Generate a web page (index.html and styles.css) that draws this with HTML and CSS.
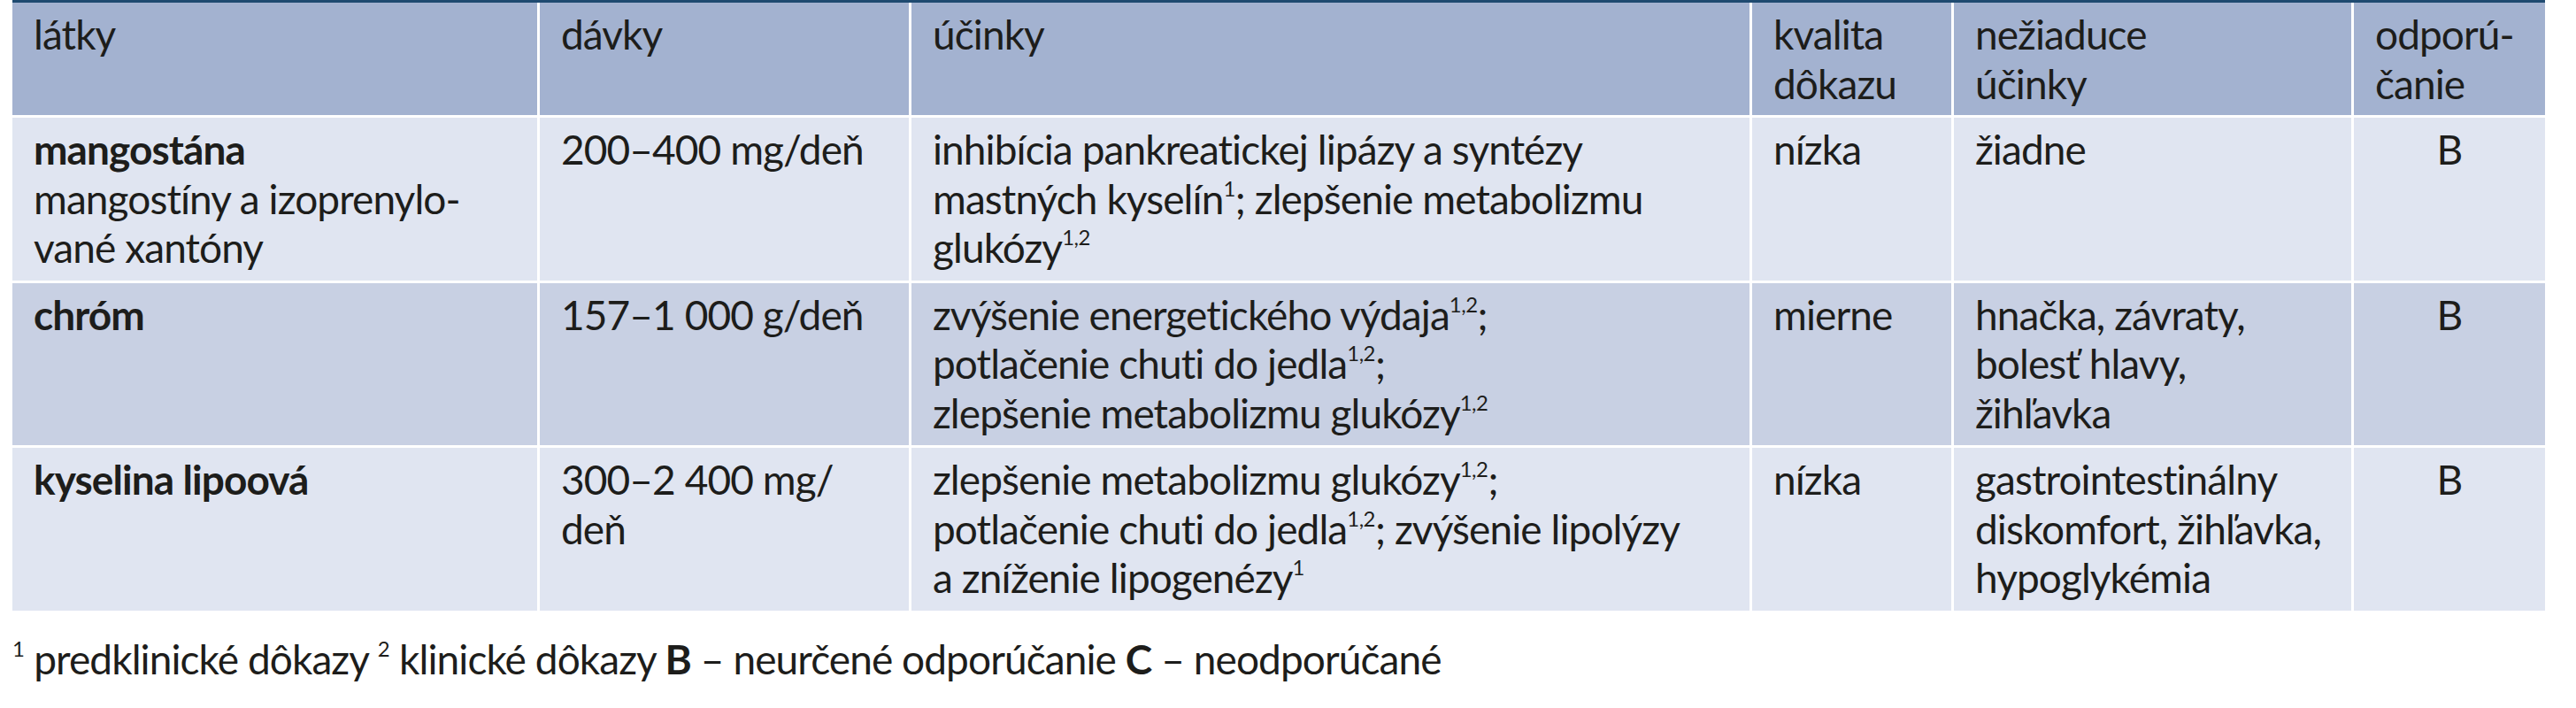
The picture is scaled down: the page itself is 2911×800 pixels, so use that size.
FILE: index.html
```html
<!DOCTYPE html>
<html lang="sk">
<head>
<meta charset="utf-8">
<title>Látky – prehľad</title>
<link rel="stylesheet" href="styles.css">
</head>
<body>
<main class="page">
  <table class="data">
    <colgroup>
      <col class="c1"><col class="c2"><col class="c3"><col class="c4"><col class="c5"><col class="c6">
    </colgroup>
    <thead>
      <tr>
        <th>látky</th>
        <th>dávky</th>
        <th>účinky</th>
        <th>kvalita<br>dôkazu</th>
        <th>nežiaduce<br>účinky</th>
        <th>odporú-<br>čanie</th>
      </tr>
    </thead>
    <tbody>
      <tr class="light">
        <td><span class="name">mangostána</span><br>mangostíny a izoprenylo-<br>vané xantóny</td>
        <td>200–400 mg/deň</td>
        <td>inhibícia pankreatickej lipázy a syntézy<br>mastných kyselín<sup>1</sup>; zlepšenie metabolizmu<br>glukózy<sup>1,2</sup></td>
        <td>nízka</td>
        <td>žiadne</td>
        <td class="center">B</td>
      </tr>
      <tr class="mid">
        <td><span class="name">chróm</span></td>
        <td>157–1&nbsp;000 g/deň</td>
        <td>zvýšenie energetického výdaja<sup>1,2</sup>;<br>potlačenie chuti do jedla<sup>1,2</sup>;<br>zlepšenie metabolizmu glukózy<sup>1,2</sup></td>
        <td>mierne</td>
        <td>hnačka, závraty,<br>bolesť hlavy,<br>žihľavka</td>
        <td class="center">B</td>
      </tr>
      <tr class="light last">
        <td><span class="name">kyselina lipoová</span></td>
        <td>300–2&nbsp;400 mg/<br>deň</td>
        <td>zlepšenie metabolizmu glukózy<sup>1,2</sup>;<br>potlačenie chuti do jedla<sup>1,2</sup>; zvýšenie lipolýzy<br>a zníženie lipogenézy<sup>1</sup></td>
        <td>nízka</td>
        <td>gastrointestinálny<br>diskomfort, žihľavka,<br>hypoglykémia</td>
        <td class="center">B</td>
      </tr>
    </tbody>
  </table>
  <p class="note"><sup>1</sup> predklinické dôkazy <sup>2</sup> klinické dôkazy <b>B</b> – neurčené odporúčanie <b>C</b> – neodporúčané</p>
</main>
</body>
</html>
```

FILE: styles.css
```css
html, body {
  margin: 0;
  padding: 0;
  background: #ffffff;
}

body {
  font-family: Lato, "Open Sans", "Liberation Sans", sans-serif;
  color: #1d1d1b;
  font-size: 46px;
  line-height: 55.5px;
  letter-spacing: -0.02em;
}

.page {
  padding: 0 14px;
}

.data {
  border-collapse: separate;
  border-spacing: 0;
  table-layout: fixed;
  width: 2862px;
  border-top: 3px solid #1f4a70;
}

.c1 { width: 596px; }
.c2 { width: 420px; }
.c3 { width: 950px; }
.c4 { width: 228px; }
.c5 { width: 452px; }
.c6 { width: 216px; }

.data th,
.data td {
  padding: 8px 8px 9px 24px;
  text-align: left;
  vertical-align: top;
  white-space: nowrap;
  font-weight: 400;
  border-right: 3px solid #ffffff;
  border-bottom: 3px solid #ffffff;
}

.data th:last-child,
.data td:last-child {
  border-right: 0;
}

.data thead th {
  background: #a3b2d0;
  padding-bottom: 8px;
}

.data tr.light td {
  background: #e0e5f1;
}

.data tr.mid td {
  background: #c8d0e3;
}

.data td.center {
  text-align: center;
  padding-left: 0;
  padding-right: 0;
}

.name {
  font-weight: 700;
}

sup {
  font-size: 0.52em;
  line-height: 0;
  vertical-align: 0.85em;
  letter-spacing: -0.02em;
}

.note {
  margin: 24px 0 0;
}

.note b {
  font-weight: 700;
}
```
